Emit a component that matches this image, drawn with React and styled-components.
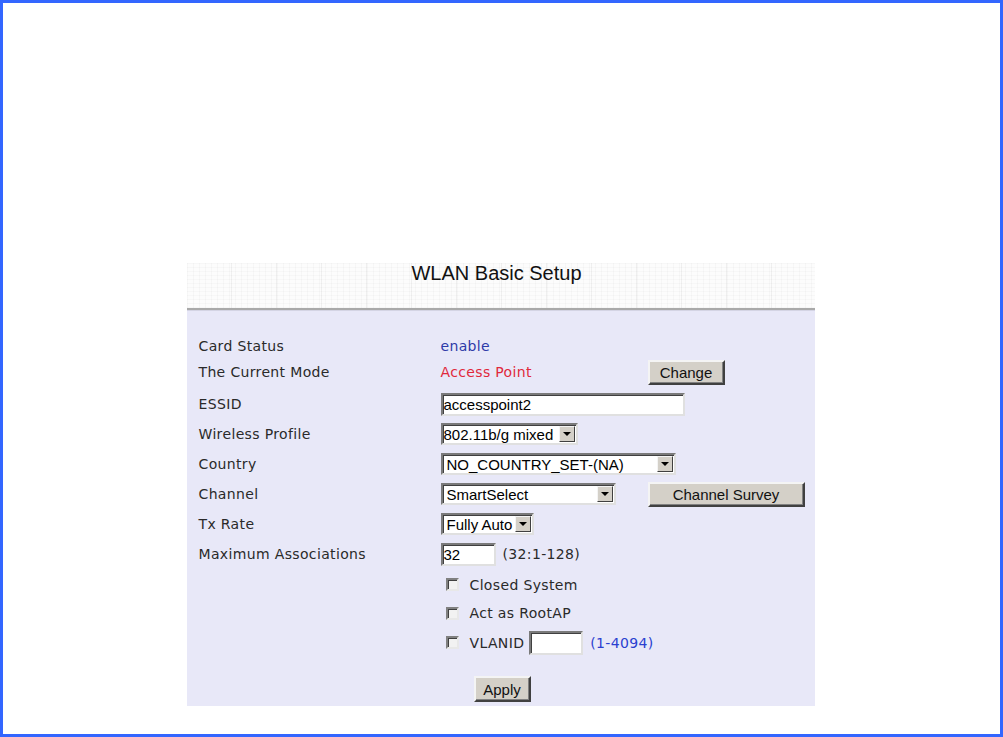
import styled, { createGlobalStyle } from "styled-components";

const GlobalStyle = createGlobalStyle`
  html, body {
    margin: 0;
    padding: 0;
    background: #ffffff;
  }
`;

const Frame = styled.div`
  box-sizing: border-box;
  width: 1003px;
  height: 737px;
  border: 3px solid #3366ff;
  padding-top: 260px;
  background: #ffffff;
`;

const Panel = styled.div`
  width: 628px;
  margin: 0 auto;
  transform: translateX(-1px);
`;

const Header = styled.div`
  height: 47px;
  box-sizing: border-box;
  padding: 0 8px 0 0;
  display: flex;
  justify-content: center;
  background-color: #fcfcfc;
  background-image:
    repeating-linear-gradient(90deg, rgba(0,0,0,0.022) 0 1px, transparent 1px 6px),
    repeating-linear-gradient(0deg, rgba(0,0,0,0.02) 0 1px, transparent 1px 4px),
    repeating-linear-gradient(90deg, transparent 0 44px, rgba(0,0,0,0.05) 44px 45px);
  border-bottom: 2px solid #a9a9a9;
  font-family: "Liberation Sans", Arial, sans-serif;
  font-size: 20px;
  line-height: 21px;
  color: #111;
`;

const Body = styled.div`
  background: #e8e8f8;
  border-top: 1px solid #d4d4e4;
  padding: 22px 0 5px 12px;
  height: 396px;
  box-sizing: border-box;
`;

const Row = styled.div`
  display: grid;
  grid-template-columns: 242px 1fr;
  align-items: center;
  height: ${(p) => p.h || 30}px;
  margin-top: ${(p) => p.mt || 0}px;
`;

const Label = styled.div`
  font-family: "DejaVu Sans", Verdana, sans-serif;
  font-size: 14px;
  letter-spacing: 0.35px;
  color: #2a2a2a;
`;

const Value = styled.div`
  display: grid;
  grid-template-columns: 207px auto;
  align-items: center;
`;

const Inline = styled.div`
  display: flex;
  align-items: center;
  gap: ${(p) => p.gap ?? 7}px;
`;

const Text = styled.span`
  font-family: "DejaVu Sans", Verdana, sans-serif;
  font-size: 14px;
  letter-spacing: 0.35px;
  color: ${(p) => p.color || "#2a2a2a"};
  margin-left: ${(p) => p.ml || 0}px;
`;

const Input = styled.div`
  box-sizing: border-box;
  width: ${(p) => p.w}px;
  height: ${(p) => p.h || 23}px;
  background: #ffffff;
  border-style: solid;
  border-width: 2px;
  border-color: #7a7a7a #e0e0e0 #e0e0e0 #7a7a7a;
  box-shadow: inset 1px 1px 0 #404040;
  font-family: "Liberation Sans", Arial, sans-serif;
  font-size: 15px;
  color: #000;
  display: flex;
  align-items: center;
  padding-left: 1px;
`;

const Select = styled.div`
  box-sizing: border-box;
  width: ${(p) => p.w}px;
  height: 22px;
  background: #ffffff;
  border-style: solid;
  border-width: 2px;
  border-color: #7a7a7a #e0e0e0 #e0e0e0 #7a7a7a;
  box-shadow: inset 1px 1px 0 #404040;
  font-family: "Liberation Sans", Arial, sans-serif;
  font-size: 15px;
  color: #000;
  display: flex;
  align-items: center;
  justify-content: space-between;
  padding-left: ${(p) => p.pl || 3}px;
`;

const Arrow = styled.span`
  box-sizing: border-box;
  width: 16px;
  height: 16px;
  margin-right: 1px;
  background: #d4d0c8;
  border-style: solid;
  border-width: 1px;
  border-color: #f4f4f4 #404040 #404040 #f4f4f4;
  display: flex;
  align-items: center;
  justify-content: center;
  &::after {
    content: "";
    border-left: 4px solid transparent;
    border-right: 4px solid transparent;
    border-top: 4px solid #000;
  }
`;

const Button = styled.button`
  box-sizing: border-box;
  width: ${(p) => p.w}px;
  height: ${(p) => p.h || 25}px;
  background: #d4d0c8;
  border-style: solid;
  border-width: 2px;
  border-color: #f4f4f4 #404040 #404040 #f4f4f4;
  box-shadow: inset -1px -1px 0 #808080;
  font-family: "Liberation Sans", Arial, sans-serif;
  font-size: 15px;
  color: #111;
  padding: 0;
  margin: 0;
`;

const Check = styled.span`
  box-sizing: border-box;
  width: 13px;
  height: 13px;
  margin-left: 5px;
  margin-right: 11px;
  background: #f2f2f2;
  border-style: solid;
  border-width: 2px;
  border-color: #808080 #e8e8e8 #e8e8e8 #808080;
  box-shadow: inset 1px 1px 0 #404040;
`;

const Footer = styled.div`
  margin-top: 17px;
  padding-left: 275px;
`;

export default function App() {
  return (
    <>
      <GlobalStyle />
      <Frame>
        <Panel>
          <Header>WLAN Basic Setup</Header>
          <Body>
            <Row h={26}>
              <Label>Card Status</Label>
              <Text color="#2e3aa8">enable</Text>
            </Row>
            <Row h={26}>
              <Label>The Current Mode</Label>
              <Value>
                <Text color="#e0283c">Access Point</Text>
                <Button w={77}>Change</Button>
              </Value>
            </Row>
            <Row mt={4}>
              <Label>ESSID</Label>
              <Input w={244}>accesspoint2</Input>
            </Row>
            <Row>
              <Label>Wireless Profile</Label>
              <Select w={137} pl={1}>
                802.11b/g mixed<Arrow />
              </Select>
            </Row>
            <Row>
              <Label>Country</Label>
              <Select w={235} pl={4}>
                NO_COUNTRY_SET-(NA)<Arrow />
              </Select>
            </Row>
            <Row>
              <Label>Channel</Label>
              <Value>
                <Select w={175} pl={4}>
                  SmartSelect<Arrow />
                </Select>
                <Button w={157}>Channel Survey</Button>
              </Value>
            </Row>
            <Row>
              <Label>Tx Rate</Label>
              <Select w={93} pl={4}>
                Fully Auto<Arrow />
              </Select>
            </Row>
            <Row>
              <Label>Maximum Associations</Label>
              <Inline>
                <Input w={55}>32</Input>
                <Text>(32:1-128)</Text>
              </Inline>
            </Row>
            <Row h={31}>
              <span />
              <Inline gap={0}>
                <Check />
                <Text>Closed System</Text>
              </Inline>
            </Row>
            <Row h={26}>
              <span />
              <Inline gap={0}>
                <Check />
                <Text>Act as RootAP</Text>
              </Inline>
            </Row>
            <Row h={33}>
              <span />
              <Inline gap={0}>
                <Check />
                <Inline gap={5}>
                  <Text>VLANID</Text>
                  <Input w={54} h={24} />
                  <Text color="#2b3fd0" ml={2}>(1-4094)</Text>
                </Inline>
              </Inline>
            </Row>
            <Footer>
              <Button w={57} h={26}>Apply</Button>
            </Footer>
          </Body>
        </Panel>
      </Frame>
    </>
  );
}
